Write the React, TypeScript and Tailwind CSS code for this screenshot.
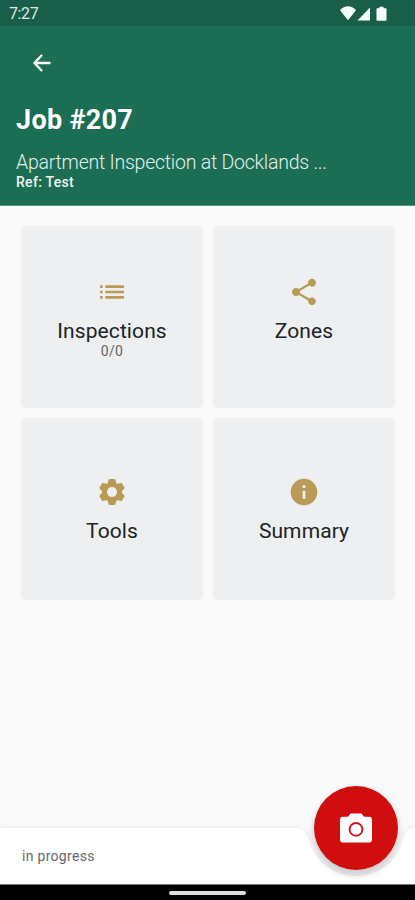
import type { ReactNode } from "react";
import { MdInfo, MdList, MdShare } from "react-icons/md";

function StatusIcons() {
  return (
    <svg width="50" height="18" viewBox="0 0 50 18" fill="#f6fffb">
      <path d="M0 5.200C4.500 0 11.500 0 16 5.200L8 15.300Z" transform="translate(0 1)" />
      <path d="M17.500 16.500L30 3.500V16.500Z" />
      <path d="M39.500 2.700h4v1.600h2.200q.8 0 .8.800v10.800q0 .8-.8.800h-8.400q-.8 0-.8-.8V5.100q0-.8.8-.8h2.200z" />
    </svg>
  );
}

function BackArrow() {
  return (
    <svg width="26" height="26" viewBox="0 0 26 26" fill="none" stroke="#fff" strokeWidth="2.300">
      <path d="M21.500 13H6M13 5L5.500 13L13 21" />
    </svg>
  );
}

function Gear() {
  return (
    <svg width="32" height="32" viewBox="-16 -16 32 32" fill="currentColor">
      {[0, 60, 120, 180, 240, 300].map((angle) => (
        <path key={angle} d="M-5 -7L-3.200 -12.400Q-3 -13 -2.400 -13H2.400Q3 -13 3.200 -12.400L5 -7Z" transform={`rotate(${angle})`} />
      ))}
      <circle r="7.300" fill="none" stroke="currentColor" strokeWidth="5" />
      <circle r="4.800" fill="#edeff0" />
    </svg>
  );
}

function Camera() {
  return (
    <svg width="34" height="30" viewBox="0 0 34 30">
      <path d="M11.500 .5H22.500L25 3.700H30Q33 3.700 33 6.700V26.500Q33 29.500 30 29.500H4Q1 29.500 1 26.500V6.700Q1 3.700 4 3.700H9Z" fill="#fff" />
      <circle cx="17" cy="16.400" r="6.400" fill="none" stroke="#c91a1c" strokeWidth="1.900" />
    </svg>
  );
}

function Card({ icon, title, note, low }: { icon: ReactNode; title: string; note?: string; low?: boolean }) {
  return (
    <button
      className={`flex h-[182px] flex-col items-center rounded-[5px] bg-[#edeff0] text-[#b99a57] shadow-[0_0_2px_#f0f2f2] ${low ? "pt-[58px]" : "pt-[50px]"}`}
    >
      {icon}
      <span className="mt-[11px] text-[21px] leading-6 tracking-[0.1px] text-[#202224]">{title}</span>
      {note && <span className="text-[14px] leading-4 tracking-[0.3px] text-[#626668]">{note}</span>}
    </button>
  );
}

export default function App() {
  return (
    <div className="flex h-[900px] w-[415px] flex-col overflow-hidden bg-[#fafafa] font-['Roboto',sans-serif]">
      <header className="h-[206px] shrink-0 border-b border-[#5b9581] bg-[#1b6d54] text-white">
        <div className="flex h-[26px] items-center justify-between bg-[#185e49] pl-[9px] pr-[25px]">
          <span className="pt-[2px] text-[16px] leading-5 tracking-[-0.4px] text-[#dcebe5]">7:27</span>
          <StatusIcons />
        </div>
        <div className="flex h-[74px] items-center pl-[29px]">
          <BackArrow />
        </div>
        <div className="px-4">
          <h1 className="text-[27px] font-bold leading-10 tracking-[0.3px]">Job #207</h1>
          <p className="mt-[11px] text-[19.5px] font-light leading-[23px] tracking-[-0.24px] text-[#e3f0eb]">
            Apartment Inspection at Docklands ...
          </p>
          <p className="text-[14px] font-medium leading-4 tracking-[0.3px] text-[#eef7f3]">Ref: Test</p>
        </div>
      </header>

      <main className="grid flex-1 grid-cols-[182px_182px] content-start gap-[10px] pl-[21px] pt-5">
        <Card icon={<MdList size={32} />} title="Inspections" note="0/0" />
        <Card icon={<MdShare size={32} />} title="Zones" />
        <Card icon={<Gear />} title="Tools" low />
        <Card icon={<MdInfo size={32} />} title="Summary" low />
      </main>

      <footer className="relative h-[56px] shrink-0">
        <svg className="absolute left-0 top-[-4px] overflow-visible" width="415" height="60" viewBox="0 -4 415 60">
          <path
            d="M0 0H295Q305 0 308 9A49 49 0 0 0 404 9Q406 0 415 0V56H0Z"
            fill="#fff"
            className="drop-shadow-[0_-1px_2px_rgba(0,0,0,0.06)]"
          />
        </svg>
        <p className="relative pl-[22px] pt-[18px] text-[14px] leading-5 tracking-[0.3px] text-[#66696b]">in progress</p>
        <button className="absolute left-[314px] top-[-42px] flex size-[84px] items-center justify-center rounded-full bg-[#d00d0f] shadow-[0_4px_6px_1px_rgba(0,0,0,0.18)]">
          <Camera />
        </button>
      </footer>
      <div className="flex h-4 shrink-0 justify-center border-t border-[#777] bg-black pt-[6px]">
        <div className="h-[4px] w-[77px] rounded-full bg-[#dedede]" />
      </div>
    </div>
  );
}
